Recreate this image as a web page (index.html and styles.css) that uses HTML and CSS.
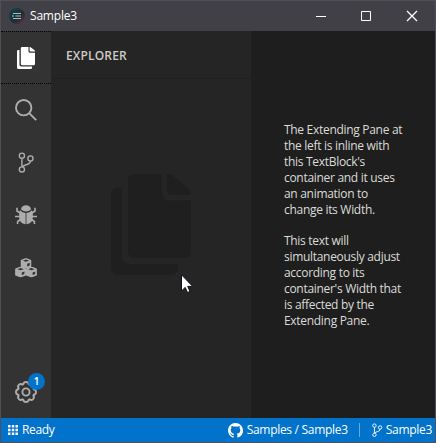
FILE: index.html
```html
<!DOCTYPE html>
<html lang="en">
<head>
<meta charset="utf-8">
<title>Sample3</title>
<link rel="stylesheet" href="styles.css">
</head>
<body>
<svg class="defs" aria-hidden="true">
  <symbol id="files" viewBox="0 0 80 101">
    <path d="M6 14H11V82a8 8 0 0 0 8 8H67v4a7 7 0 0 1-7 7H7a7 7 0 0 1-7-7V20a6 6 0 0 1 6-6z"/>
    <path d="M23 0H51V19a7.5 7.5 0 0 0 7.5 7.5H80V78a6 6 0 0 1-6 6H23a6 6 0 0 1-6-6V6a6 6 0 0 1 6-6z"/>
    <path d="M56 0H58Q60 0 62 2L78 15q2 2 2 4v2H61a5 5 0 0 1-5-5z"/>
  </symbol>
  <symbol id="branch" viewBox="0 0 18 24">
    <g fill="none" stroke="currentColor" stroke-width="1.5">
      <circle cx="4" cy="4" r="2.8"/><circle cx="4" cy="19" r="2.8"/><circle cx="13.3" cy="7" r="2.8"/>
      <path d="M4 6.8v9.4M13.3 9.8c0 5-7.3 3.2-9 6.6"/>
    </g>
  </symbol>
  <symbol id="cube" viewBox="0 0 11 11">
    <path fill-rule="evenodd" d="M5.5 0 10.2 1.700Q11 2 11 2.800V8.200Q11 9 10.200 9.300L5.500 11 .8 9.300Q0 9 0 8.200V2.800Q0 2 .8 1.700zM5.500 1.600 2.300 2.700 5.500 3.800 8.700 2.700zM6.700 5.900V8.600L9.300 7.600V4.900z"/>
  </symbol>
</svg>
<div class="window">
  <header class="titlebar">
    <svg class="app-icon" width="16" height="16" viewBox="0 0 16 16">
      <defs><linearGradient id="app" x1="0" y1="0" x2="1" y2="1"><stop offset="0" stop-color="#10434c"/><stop offset=".6" stop-color="#202d38"/><stop offset="1" stop-color="#7c2f32"/></linearGradient></defs>
      <circle cx="8" cy="8" r="8" fill="url(#app)"/>
      <path d="M4 5.500h8M6.500 8H12M4 10.500h8M4 7v2" stroke="#a9bdbb" stroke-width="1.1"/>
    </svg>
    <span class="title">Sample3</span>
    <div class="controls">
      <svg width="10" height="10" viewBox="0 0 10 10"><path d="M0 5.500h10"/></svg>
      <svg width="10" height="10" viewBox="0 0 10 10"><path d="M.5.5h9v9h-9z"/></svg>
      <svg width="10" height="10" viewBox="0 0 10 10"><path d="M0 0l10 10M10 0L0 10" stroke-width="1.3"/></svg>
    </div>
  </header>
  <main class="body">
    <nav class="rail">
      <div class="item active"><svg width="18" height="22" viewBox="0 0 80 101" preserveAspectRatio="none"><use href="#files" width="80" height="101"/></svg></div>
      <div class="item"><svg class="line" width="22" height="22" viewBox="0 0 22 22"><circle cx="8.700" cy="8.700" r="7.700"/><path d="M14.200 14.200l7 7"/></svg></div>
      <div class="item"><svg width="17" height="22"><use href="#branch"/></svg></div>
      <div class="item"><svg width="22" height="20" viewBox="0 0 22 20">
        <path d="M6 4.400C6.500-1.100 15.500-1.100 16 4.400Q11 8.600 6 4.400z"/>
        <path d="M5 5.200Q7.500 7.700 10.600 7.900V19.300Q4.200 18.500 4.200 12.500V7.500zM17 5.200Q14.500 7.700 11.400 7.900V19.300Q17.800 18.500 17.800 12.500V7.500z"/>
        <path class="legs" d="M5 8L2 6V2.800M5 11.500H0M5.500 14.500L2.600 16.500V19M17 8l3-2V2.800M17 11.500h5M16.500 14.500l2.900 2V19"/>
      </svg></div>
      <div class="item"><svg width="22" height="20" viewBox="0 0 22 20"><use href="#cube" x="5.300" y="0" width="11.400" height="10.800"/><use href="#cube" x="0" y="8.500" width="11.200" height="11"/><use href="#cube" x="10.800" y="8.500" width="11.200" height="11"/></svg></div>
      <div class="item settings">
        <svg class="line" width="24" height="24" viewBox="0 0 24 24"><circle cx="12" cy="12" r="3.600"/><path d="M9.300 4.200Q9.700 2 12 2t2.700 2.200l.9.400Q17.500 3.300 19.100 4.900t.3 3.500l.4.900Q22 9.700 22 12t-2.200 2.700l-.4.900q1.300 1.900-.3 3.500t-3.500.3l-.9.400Q14.300 22 12 22t-2.700-2.200l-.9-.4q-1.900 1.300-3.500-.3t-.3-3.500l-.4-.9Q2 14.300 2 12t2.200-2.700l.4-.9Q3.300 6.500 4.900 4.900t3.500-.3z"/></svg>
        <span class="badge">1</span>
      </div>
    </nav>
    <section class="explorer">
      <h1>EXPLORER</h1>
      <div class="empty"><svg width="80" height="101"><use href="#files"/></svg></div>
    </section>
    <section class="content">
      <p>The Extending Pane at<br>the left is inline with<br>this TextBlock's<br>container and it uses<br>an animation to<br>change its Width.</p>
      <p>This text will<br>simultaneously adjust<br>according to its<br>container's Width that<br>is affected by the<br>Extending Pane.</p>
    </section>
  </main>
  <footer class="status">
    <svg width="10" height="10" viewBox="0 0 10 10"><path d="M0 0h2.500v2.500H0zM3.800 0h2.500v2.500H3.800zM7.500 0H10v2.500H7.500zM0 3.800h2.500v2.500H0zM3.800 3.800h2.500v2.500H3.800zM7.500 3.800H10v2.500H7.500zM0 7.500h2.500V10H0zM3.800 7.500h2.500V10H3.800zM7.500 7.500H10V10H7.500z"/></svg>
    <span class="ready">Ready</span>
    <svg class="github" width="15" height="15" viewBox="0 0 16 16"><path d="M8 0C3.580 0 0 3.580 0 8c0 3.540 2.290 6.530 5.470 7.590.4.070.55-.17.55-.38 0-.19-.01-.82-.01-1.490-2.010.37-2.530-.49-2.690-.94-.09-.23-.48-.94-.82-1.130-.28-.15-.68-.52-.01-.53.63-.01 1.080.58 1.230.82.72 1.210 1.870.87 2.330.66.07-.52.28-.87.51-1.070-1.780-.2-3.640-.89-3.640-3.950 0-.87.31-1.590.82-2.150-.08-.2-.36-1.020.08-2.120 0 0 .67-.21 2.200.82.64-.18 1.320-.27 2-.27s1.360.09 2 .27c1.530-1.040 2.200-.82 2.200-.82.44 1.100.16 1.920.08 2.120.51.56.82 1.270.82 2.150 0 3.070-1.870 3.750-3.650 3.950.29.25.54.73.54 1.480 0 1.070-.01 1.930-.01 2.200 0 .21.15.46.55.38A8 8 0 0 0 16 8c0-4.420-3.580-8-8-8z"/></svg>
    <span class="repo">Samples / Sample3</span>
    <i class="divider"></i>
    <svg width="11" height="15"><use href="#branch"/></svg>
    <span class="branch-name">Sample3</span>
  </footer>
</div>
<svg class="cursor" width="12" height="19" viewBox="0 0 12 19"><path d="M.5.800V17l3.700-3.600 2.300 5.100 2.500-1.100-2.300-5h5z" fill="#fff" stroke="#10101c" stroke-width="1"/></svg>
</body>
</html>
```
FILE: styles.css
```css
* { box-sizing: border-box; }
body { margin: 0; font: 12px/16px "Open Sans", "Noto Sans", sans-serif; overflow: hidden; }
svg { display: block; fill: currentColor; flex: none; }
.defs { position: absolute; width: 0; height: 0; }
.window { width: 436px; height: 443px; border: 1px solid #505058; display: flex; flex-direction: column; }
.titlebar { height: 30px; background: #414046; color: #fff; display: flex; align-items: center; padding-left: 8px; flex: none; }
.title { margin-left: 5px; letter-spacing: -.2px; }
.controls { margin-left: auto; display: flex; gap: 35px; padding-right: 18px; }
.controls svg { fill: none; stroke: #fff; stroke-width: 1; overflow: visible; }
.controls svg:not(:last-child) { transform: translateX(-1px); }
.body { flex: 1; min-height: 0; display: flex; }
.rail { width: 50px; background: #333; color: #adadad; display: flex; flex-direction: column; }
.item { height: 52.5px; flex: none; display: flex; align-items: center; justify-content: center; }
.line, .legs { fill: none; stroke: currentColor; stroke-width: 1.9; }
.legs { stroke-width: 1.6; }
.active { color: #fff; border-top: 1px dotted #000; border-bottom: 1px dotted #000; height: 53px; }
.settings { margin-top: auto; position: relative; }
.badge { position: absolute; left: 27px; top: 7px; width: 17px; height: 17px; border-radius: 50%; background: #0173cb; color: #fff; font-size: 10px; font-weight: 600; line-height: 17px; text-align: center; }
.explorer { width: 200px; background: #252525; display: flex; flex-direction: column; }
h1 { margin: 0; height: 48px; padding: 17px 15px 0; font-size: 12px; line-height: 16px; font-weight: 600; color: #ccccc7; letter-spacing: .17px; border-bottom: 1px solid #202020; }
.empty { color: #1f1f1f; padding: 95px 0 0 60px; }
.content { flex: 1; background: #1e1e1e; color: #dcdcd7; padding: 91px 0 0 33px; white-space: nowrap; }
p { margin: 0 0 15px; letter-spacing: -.3px; }
.status { height: 24px; flex: none; background: #0173cb; color: #fff; display: flex; align-items: center; padding: 0 3px 0 7px; }
.ready { margin-left: 4px; letter-spacing: -.35px; }
.github { margin-left: auto; }
.repo { margin-left: 4px; letter-spacing: -.3px; }
.divider { width: 1px; height: 14px; background: #65a9dd; margin: 0 12px 0 11px; }
.branch-name { margin-left: 3px; letter-spacing: -.3px; }
.cursor { position: absolute; left: 181px; top: 274px; }
```
